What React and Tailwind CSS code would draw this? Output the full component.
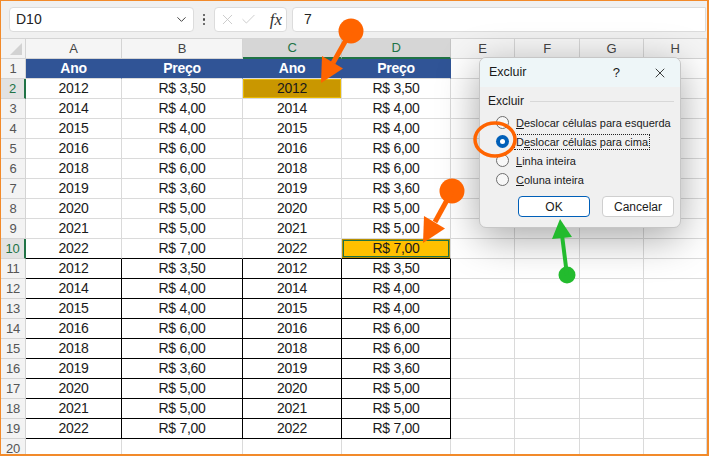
import { ChevronDown, X, Check } from 'lucide-react'

const DATA = [
  ['2012', 'R$ 3,50'],
  ['2014', 'R$ 4,00'],
  ['2015', 'R$ 4,00'],
  ['2016', 'R$ 6,00'],
  ['2018', 'R$ 6,00'],
  ['2019', 'R$ 3,60'],
  ['2020', 'R$ 5,00'],
  ['2021', 'R$ 5,00'],
  ['2022', 'R$ 7,00'],
]

const COLS = ['A', 'B', 'C', 'D', 'E', 'F', 'G', 'H']

function rowValues(n) {
  if (n === 1) return ['Ano', 'Preço', 'Ano', 'Preço']
  if (n >= 2 && n <= 19) {
    const [y, p] = DATA[(n - 2) % 9]
    return [y, p, y, p]
  }
  return []
}

function Cell({ row, col, value }) {
  const inTable = col < 4
  const header = row === 1 && inTable
  const boxed = inTable && row >= 11 && row <= 19
  const blackBottom = inTable && row >= 10 && row <= 19

  let cls = 'h-[20px] flex items-center justify-center border-r border-b '
  cls += boxed ? 'border-r-black ' : header ? 'border-r-[#305496] ' : 'border-r-[#dadada] '
  cls += blackBottom ? 'border-b-black ' : 'border-b-[#dadada] '

  if (header) cls += 'bg-[#305496] text-white font-bold '
  else if (row === 2 && col === 2) cls += 'bg-[#c99700] text-[#1a1a1a] shadow-[inset_0_0_0_1px_#e8b800] '
  else if (row === 10 && col === 3) cls += 'bg-[#ffc000] text-[#1a1a1a] shadow-[inset_0_0_0_1px_#b89000,inset_0_0_0_2px_#217346] '
  else cls += 'bg-white text-[#1a1a1a] '

  return <div className={cls}>{value}</div>
}

function Radio({ checked, children, focus }) {
  return (
    <div className="flex items-center h-[19px] whitespace-nowrap">
      <span
        className={
          checked
            ? 'shrink-0 w-[13px] h-[13px] rounded-full bg-[#005fb8] flex items-center justify-center ml-[16px]'
            : 'shrink-0 w-[13px] h-[13px] rounded-full border border-[#6e6e6e] bg-[#f7f7f7] ml-[16px]'
        }
      >
        {checked && <span className="w-[5px] h-[5px] rounded-full bg-white" />}
      </span>
      <span className={focus ? 'ml-[6px] px-[1px] outline outline-1 outline-dotted outline-[#222] leading-[14px]' : 'ml-[7px] leading-[14px]'}>
        {children}
      </span>
    </div>
  )
}

function Annotations() {
  return (
    <svg className="absolute left-0 top-0 pointer-events-none" width="709" height="456">
      <g fill="#ff6400" stroke="#ff6400">
        <circle cx="350" cy="30" r="12.5" stroke="none" />
        <line x1="350" y1="30" x2="332" y2="62" strokeWidth="5" />
        <polygon points="320,82 342,67.5 321,55" stroke="none" />
        <circle cx="451" cy="190" r="12.5" stroke="none" />
        <line x1="451" y1="190" x2="434" y2="221" strokeWidth="5" />
        <polygon points="422,242 444,227.5 423,215" stroke="none" />
      </g>
      <ellipse cx="494" cy="138.5" rx="20" ry="16.5" fill="none" stroke="#ff6400" strokeWidth="3.5" />
      <g fill="#23bb2e" stroke="#23bb2e">
        <circle cx="566" cy="274" r="8.5" stroke="none" />
        <line x1="566" y1="274" x2="561" y2="234" strokeWidth="4" />
        <polygon points="559,218 571,236 551,238" stroke="none" />
      </g>
    </svg>
  )
}

export default function App() {
  const rows = Array.from({ length: 20 }, (_, i) => i + 1)

  return (
    <div
      className="relative w-[709px] h-[456px] overflow-hidden bg-white border-t border-l border-r-2 border-b-2 border-[#f28a2a] text-[14px] tracking-[-0.3px]"
      style={{ fontFamily: '"Liberation Sans", Arial, sans-serif' }}
    >
      {/* formula bar */}
      <div className="h-[38px] bg-[#f0f0f0] border-b border-[#d4d4d4] flex items-center pl-[8px] pr-[1px]">
        <div className="w-[185px] h-[25px] bg-white border border-[#dcdcdc] rounded-[4px] flex items-center pl-[6px] pr-[4px] justify-between">
          <span className="text-[14px] tracking-normal text-[#222]">D10</span>
          <ChevronDown size={15} strokeWidth={1.6} className="text-[#444]" />
        </div>
        <div className="w-[20px] flex flex-col items-center gap-[2px]">
          <span className="w-[2.5px] h-[2.5px] bg-[#444] rounded-full" />
          <span className="w-[2.5px] h-[2.5px] bg-[#444] rounded-full" />
          <span className="w-[2.5px] h-[2.5px] bg-[#444] rounded-full" />
        </div>
        <div className="w-[73px] h-[25px] bg-white border border-[#dcdcdc] rounded-[4px] flex items-center pl-[4px] pr-[4px]">
          <X size={17} strokeWidth={1.2} className="text-[#c4c4c4]" />
          <Check size={17} strokeWidth={1.2} className="text-[#c4c4c4] ml-[4px]" />
          <span
            className="ml-auto italic text-[17px] text-[#333] tracking-normal leading-none"
            style={{ fontFamily: '"Liberation Serif", "Times New Roman", serif' }}
          >
            fx
          </span>
        </div>
        <div className="flex-1 ml-[5px] h-[25px] bg-white border border-[#dcdcdc] rounded-l-[4px] flex items-center pl-[11px] text-[14px] text-[#222]">
          7
        </div>
      </div>

      {/* sheet */}
      <div className="grid grid-cols-[25px_96px_121px_99px_109px_64px_65px_64px_63px]">
        <div className="h-[20px] bg-[#f3f3f3] border-r border-b border-[#d4d4d4] relative">
          <div className="absolute right-[3px] bottom-[3px] w-0 h-0 border-l-[12px] border-l-transparent border-b-[12px] border-b-[#d2d2d2]" />
        </div>
        {COLS.map((c, i) => {
          const sel = i === 2 || i === 3
          return (
            <div
              key={c}
              className={
                sel
                  ? 'h-[20px] flex items-center justify-center bg-[#d6d6d6] text-[#217346] border-r border-r-[#c4c4c4] border-b-2 border-b-[#217346] text-[13px]'
                  : 'h-[20px] flex items-center justify-center bg-[#f5f5f5] text-[#444] border-r border-r-[#d4d4d4] border-b border-b-[#d4d4d4] text-[13px]'
              }
            >
              {c}
            </div>
          )
        })}

        {rows.map((r) => {
          const vals = rowValues(r)
          const sel = r === 2 || r === 10
          return [
            <div
              key={'h' + r}
              className={
                sel
                  ? 'h-[20px] flex items-center justify-center bg-[#e2e2e2] text-[#217346] text-[13px] border-r-2 border-r-[#217346] border-b border-b-[#d4d4d4]'
                  : 'h-[20px] flex items-center justify-center bg-[#f3f3f3] text-[#555] text-[13px] border-r border-r-[#d4d4d4] border-b border-b-[#d4d4d4]'
              }
            >
              {r}
            </div>,
            ...COLS.map((c, i) => <Cell key={c + r} row={r} col={i} value={vals[i]} />),
          ]
        })}
      </div>

      {/* Excluir dialog */}
      <div
        className="absolute left-[478px] top-[56px] w-[202px] h-[171px] rounded-[7px] border border-[#c6c6c6] bg-[#f0f0f0] shadow-[0_10px_40px_rgba(0,0,0,0.35)] overflow-hidden text-[12px] text-[#1a1a1a] tracking-normal"
        style={{ fontFamily: '"Liberation Sans", Arial, sans-serif' }}
      >
        <div className="h-[29px] bg-[#eef6f8] flex items-center pl-[9px] pr-[12px]">
          <span className="text-[12.5px]">Excluir</span>
          <span className="ml-auto mr-[32px] text-[13px]">?</span>
          <X size={16} strokeWidth={1.3} className="text-[#222]" />
        </div>
        <div className="pt-[5px] pl-[8px] pr-[6px] flex items-center">
          <span>Excluir</span>
          <span className="flex-1 h-px bg-[#d8d8d8] ml-[6px]" />
        </div>
        <div className="mt-[3px] flex flex-col text-[11px]">
          <Radio>
            <u>D</u>eslocar células para esquerda
          </Radio>
          <Radio checked focus>
            D<u>e</u>slocar células para cima
          </Radio>
          <Radio>
            <u>L</u>inha inteira
          </Radio>
          <Radio>
            <u>C</u>oluna inteira
          </Radio>
        </div>
        <div className="mt-[7px] flex pl-[38px] gap-[12px]">
          <button className="w-[72px] h-[21px] bg-white border border-[#005fb8] rounded-[4px] text-[12px] flex items-center justify-center">
            OK
          </button>
          <button className="w-[72px] h-[21px] bg-white border border-[#cfcfcf] rounded-[4px] text-[12px] flex items-center justify-center">
            Cancelar
          </button>
        </div>
      </div>

      <Annotations />
    </div>
  )
}
